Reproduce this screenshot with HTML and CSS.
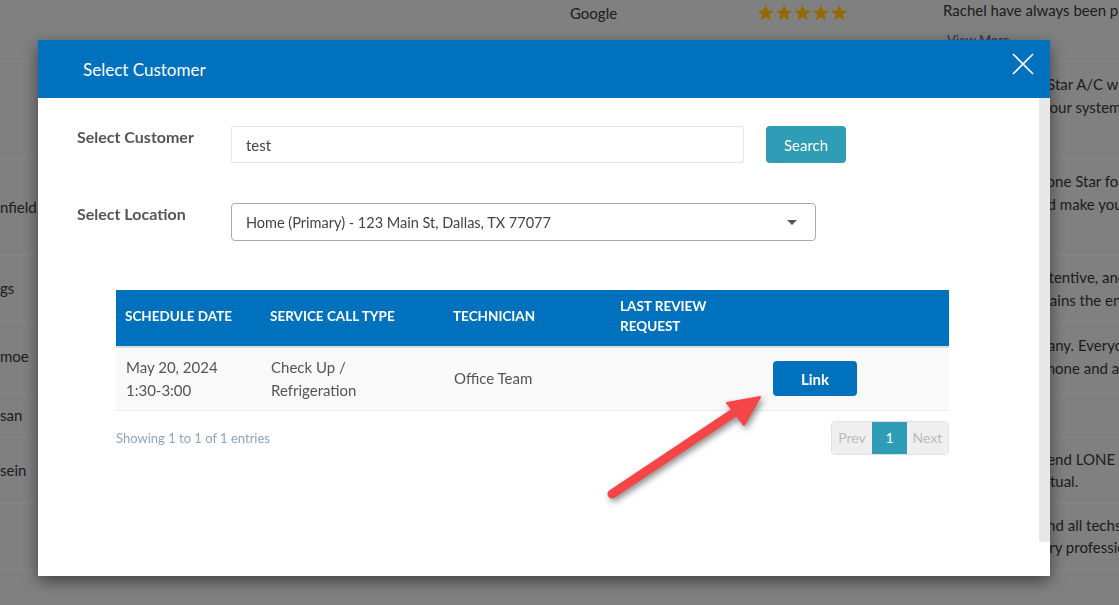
FILE: index.html
```html
<!DOCTYPE html>
<html lang="en">
<head>
    <meta charset="UTF-8">
    <meta name="viewport" content="width=device-width, initial-scale=1.0">
    <title>Reviews - Select Customer</title>
    <link rel="stylesheet" href="styles.css">
</head>
<body>
    <!-- page behind the modal -->
    <div class="reviews">
        <div class="review-row first expanded">
            <div class="cell name"></div>
            <div class="cell source">Google</div>
            <div class="cell rating">
                <svg class="stars" width="92" height="18" viewBox="0 0 92 18">
                    <defs>
                        <path id="star" d="M0,-8.8 L2.17,-2.99 L8.37,-2.72 L3.51,1.14 L5.17,7.12 L0,3.7 L-5.17,7.12 L-3.51,1.14 L-8.37,-2.72 L-2.17,-2.99 Z"/>
                    </defs>
                    <use href="#star" x="8.7" y="9.4"/>
                    <use href="#star" x="27.1" y="9.4"/>
                    <use href="#star" x="45.5" y="9.4"/>
                    <use href="#star" x="63.9" y="9.4"/>
                    <use href="#star" x="82.3" y="9.4"/>
                </svg>
            </div>
            <div class="cell review">
                Five stars for the whole team.<br>
                Rachel have always been pleasant and helpful.
                <a class="more" href="#">View More</a>
            </div>
        </div>
        <div class="review-row expanded">
            <div class="cell name"></div>
            <div class="cell source"></div>
            <div class="cell rating"></div>
            <div class="cell review">
                We called Lone Star A/C when our unit quit<br>
                to come check your system the same day.
                <a class="more" href="#">View More</a>
            </div>
        </div>
        <div class="review-row expanded">
            <div class="cell name">nfield</div>
            <div class="cell source"></div>
            <div class="cell rating"></div>
            <div class="cell review">
                We have used Lone Star for years now<br>
                They are fast and make you feel at home.
                <a class="more" href="#">View More</a>
            </div>
        </div>
        <div class="review-row">
            <div class="cell name">gs</div>
            <div class="cell source"></div>
            <div class="cell rating"></div>
            <div class="cell review">
                Pleasant, plus attentive, and on time.<br>
                Tom always explains the entire repair.
            </div>
        </div>
        <div class="review-row tall">
            <div class="cell name">moe</div>
            <div class="cell source"></div>
            <div class="cell rating"></div>
            <div class="cell review">
                Awesome company. Everyone was kind<br>
                helpful on the phone and at the door.
            </div>
        </div>
        <div class="review-row">
            <div class="cell name">san</div>
            <div class="cell source"></div>
            <div class="cell rating"></div>
            <div class="cell review">Great job.</div>
        </div>
        <div class="review-row">
            <div class="cell name">sein</div>
            <div class="cell source"></div>
            <div class="cell rating"></div>
            <div class="cell review">
                I highly recommend LONE STAR A/C<br>
                Caring and punctual.
            </div>
        </div>
        <div class="review-row">
            <div class="cell name"></div>
            <div class="cell source"></div>
            <div class="cell rating"></div>
            <div class="cell review">
                Office staffers and all techs are great<br>
                are always so very professional.
            </div>
        </div>
        <div class="review-row">
            <div class="cell name"></div>
            <div class="cell source"></div>
            <div class="cell rating"></div>
            <div class="cell review"></div>
        </div>
    </div>

    <div class="backdrop"></div>

    <div class="modal">
        <div class="modal-header">
            <h4 class="modal-title">Select Customer</h4>
            <button class="close-btn" aria-label="Close">
                <svg width="22" height="22" viewBox="0 0 22 22">
                    <path d="M1 1 L21 21 M21 1 L1 21" stroke="#fff" stroke-width="1.6" fill="none"/>
                </svg>
            </button>
        </div>

        <div class="modal-main">
            <div class="modal-body">
                <div class="form-row">
                    <label class="form-label">Select Customer</label>
                    <input class="form-input" type="text" value="test">
                    <button class="btn-search">Search</button>
                </div>

                <div class="form-row location">
                    <label class="form-label">Select Location</label>
                    <div class="form-select">
                        <span>Home (Primary) - 123 Main St, Dallas, TX 77077</span>
                        <span class="caret"></span>
                    </div>
                </div>

                <div class="results">
                    <table class="calls-table">
                        <thead>
                            <tr>
                                <th class="col-date">Schedule Date</th>
                                <th class="col-type">Service Call Type</th>
                                <th class="col-tech">Technician</th>
                                <th class="col-review">Last Review Request</th>
                                <th class="col-action"></th>
                            </tr>
                        </thead>
                        <tbody>
                            <tr>
                                <td>May 20, 2024<br>1:30-3:00</td>
                                <td>Check Up /<br>Refrigeration</td>
                                <td>Office Team</td>
                                <td></td>
                                <td><button class="btn-link">Link</button></td>
                            </tr>
                        </tbody>
                    </table>

                    <div class="table-footer">
                        <div class="table-info">Showing 1 to 1 of 1 entries</div>
                        <div class="pagination">
                            <span class="page-item disabled">Prev</span>
                            <span class="page-item active">1</span>
                            <span class="page-item disabled">Next</span>
                        </div>
                    </div>
                </div>
            </div>
            <div class="scroll-track"></div>
        </div>
        <div class="modal-footer"></div>
    </div>

    <!-- annotation arrow -->
    <svg class="callout" width="1119" height="605" viewBox="0 0 1119 605">
        <line x1="612" y1="494" x2="738" y2="410" stroke="#f44646" stroke-width="9" stroke-linecap="round"/>
        <polygon points="760,397 727,403 744,425" fill="#f44646" stroke="#f44646" stroke-width="2" stroke-linejoin="round"/>
    </svg>
</body>
</html>
```

FILE: styles.css
```css
* {
    margin: 0;
    padding: 0;
    box-sizing: border-box;
}

body {
    font-family: Lato, 'Noto Sans', sans-serif;
    background: #ddd;
    color: #333;
    width: 1119px;
    height: 605px;
    overflow: hidden;
}

/* ---------- page behind ---------- */

.reviews {
    margin-top: -35px;
}

.review-row {
    display: grid;
    grid-template-columns: 570px 187px 186px 1fr;
    border-bottom: 1px solid #e8e8e8;
    min-height: 43px;
}

.review-row.expanded {
    min-height: 97px;
}

.review-row.tall .cell {
    padding-top: 12px;
    padding-bottom: 14px;
}

.cell {
    padding: 10px 0;
    display: flex;
    flex-direction: column;
    justify-content: center;
    font-size: 15px;
    line-height: 22.5px;
    white-space: nowrap;
}

.stars {
    fill: #ffb700;
}

.review .more {
    display: block;
    margin-top: 9px;
    padding-left: 4px;
    color: #2a5f90;
    font-size: 13px;
    line-height: 20px;
    text-decoration: none;
}

.backdrop {
    position: fixed;
    inset: 0;
    background: rgba(0, 0, 0, 0.42);
}

/* ---------- modal ---------- */

.modal {
    position: fixed;
    left: 38px;
    top: 40px;
    width: 1012px;
    height: 536px;
    background: #fff;
    box-shadow: 0 5px 15px rgba(0, 0, 0, 0.5);
    display: flex;
    flex-direction: column;
}

.modal-header {
    height: 58px;
    background: #0071bc;
    display: flex;
    align-items: center;
    justify-content: space-between;
    padding: 0 16px 0 45px;
    flex-shrink: 0;
}

.modal-title {
    color: #fff;
    font-size: 17px;
    font-weight: 400;
    line-height: 1;
}

.close-btn {
    background: none;
    border: none;
    cursor: pointer;
    display: flex;
    margin-top: -10px;
}

.modal-main {
    height: 444px;
    display: flex;
}

.modal-body {
    flex: 1;
    padding: 28px 39px;
}

.scroll-track {
    width: 11px;
    background: #e8e8e8;
}

.modal-footer {
    flex: 1;
}

.form-row {
    display: flex;
    align-items: flex-start;
}

.form-row.location {
    margin-top: 40px;
}

.form-label {
    width: 154px;
    font-size: 16px;
    font-weight: 700;
    line-height: 22px;
    color: #555;
}

.form-input {
    width: 513px;
    height: 37px;
    border: 1px solid #e6e6e6;
    border-radius: 2px;
    padding: 0 14px;
    font-family: inherit;
    font-size: 15px;
    color: #444;
    outline: none;
}

.btn-search {
    margin-left: 22px;
    width: 80px;
    height: 37px;
    border: none;
    border-radius: 4px;
    background: #2f9db5;
    color: #fff;
    font-family: inherit;
    font-size: 15px;
}

.form-select {
    width: 585px;
    height: 38px;
    border: 1px solid #aaa;
    border-radius: 4px;
    padding: 0 18px 0 14px;
    display: flex;
    align-items: center;
    justify-content: space-between;
    font-size: 14.5px;
    color: #444;
}

.caret {
    width: 0;
    height: 0;
    border-left: 5px solid transparent;
    border-right: 5px solid transparent;
    border-top: 5px solid #555;
}

/* ---------- results table ---------- */

.results {
    width: 833px;
    margin: 49px 0 0 39px;
}

.calls-table {
    width: 833px;
    border-collapse: collapse;
    table-layout: fixed;
}

.calls-table th {
    height: 57px;
    background: #0071bc;
    border-bottom: 2px solid #dcdcdc;
    color: #fff;
    font-size: 13.5px;
    font-weight: 700;
    line-height: 20px;
    text-transform: uppercase;
    text-align: left;
    padding: 0 9px 4px;
}

.col-date { width: 145px; }
.col-type { width: 183px; }
.col-tech { width: 167px; }
.col-review { width: 153px; }
.col-action { width: 185px; }

.calls-table td {
    height: 63px;
    background: #f9f9f9;
    border-bottom: 1px solid #e6edf3;
    padding: 0 10px;
    font-size: 15px;
    line-height: 23px;
    color: #555;
    vertical-align: middle;
}

.calls-table td:last-child {
    padding-left: 9px;
}

.btn-link {
    width: 84px;
    height: 35px;
    border: none;
    border-radius: 4px;
    background: #0071bc;
    color: #fff;
    font-family: inherit;
    font-size: 15px;
    font-weight: 700;
}

.table-footer {
    display: flex;
    justify-content: space-between;
    align-items: center;
    margin-top: 10px;
}

.table-info {
    font-size: 13px;
    color: #8fa4ba;
}

.pagination {
    display: flex;
    border: 1px solid #e0e0e0;
    border-radius: 4px;
    overflow: hidden;
}

.page-item {
    height: 32px;
    display: flex;
    align-items: center;
    justify-content: center;
    font-size: 14px;
    background: #efefef;
    color: #bbb;
}

.page-item:first-child { width: 40px; }
.page-item:last-child { width: 41px; }

.page-item.active {
    width: 35px;
    background: #2f9db5;
    color: #fff;
}

/* ---------- annotation ---------- */

.callout {
    position: fixed;
    left: 0;
    top: 0;
    pointer-events: none;
    filter: drop-shadow(2px 3px 3px rgba(0, 0, 0, 0.45));
}
```
